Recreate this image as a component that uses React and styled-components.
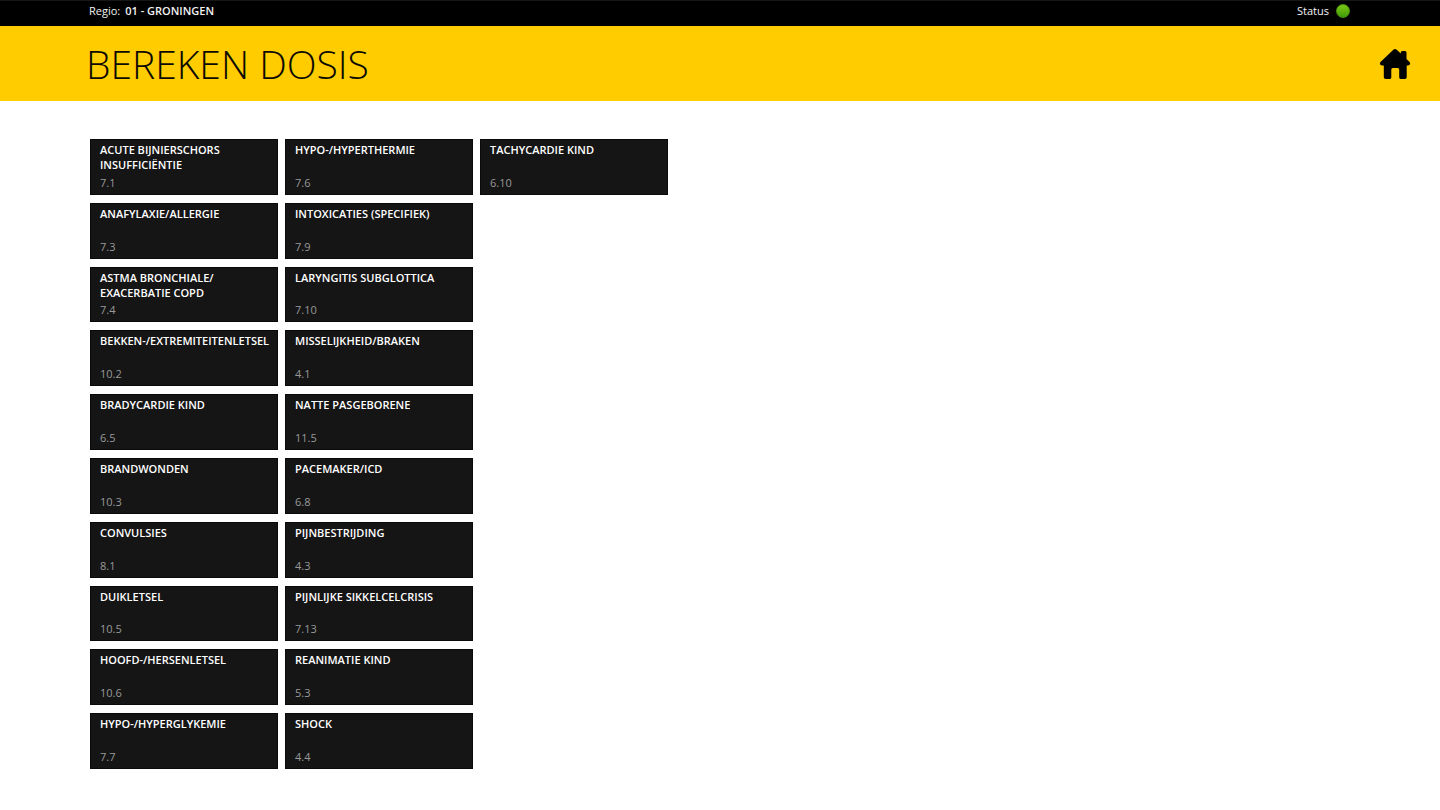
import React from "react";
import styled, { createGlobalStyle } from "styled-components";

const GlobalStyle = createGlobalStyle`
  *, *::before, *::after { box-sizing: border-box; }
  body {
    margin: 0;
    background: #fff;
    font-family: "Segoe UI", "Open Sans", "Noto Sans", sans-serif;
  }
`;

const StatusBar = styled.header`
  display: flex;
  justify-content: space-between;
  align-items: flex-start;
  height: 26px;
  padding: 2px 90px 0 89px;
  background: #000;
  border-top: 1px solid #161616;
  color: #f2f2f2;
  font-size: 11px;
  line-height: 16px;
`;

const Region = styled.div`
  display: flex;
  gap: 5px;
`;

const RegionName = styled.strong`
  font-weight: 600;
`;

const Status = styled.div`
  display: flex;
  align-items: center;
  gap: 7px;
`;

const StatusLight = styled.span`
  width: 14px;
  height: 14px;
  border-radius: 50%;
  background: linear-gradient(#7cc718, #3f9d06);
  border: 1px solid #4a8f12;
`;

const TitleBar = styled.div`
  display: flex;
  justify-content: space-between;
  align-items: center;
  height: 75px;
  padding: 0 28px 0 86px;
  background: #ffcc00;
`;

const Title = styled.h1`
  margin: 0;
  color: #0c0a00;
  font-size: 39px;
  font-weight: 300;
  line-height: 56px;
`;

const HomeButton = styled.button`
  display: flex;
  padding: 0;
  border: 0;
  background: none;
  color: #000;
  cursor: pointer;
`;

const Tiles = styled.main`
  display: grid;
  grid-auto-flow: column;
  grid-template-rows: repeat(10, 1fr);
  grid-auto-columns: 188px;
  gap: 8px 7px;
  height: 630px;
  margin: 38px 90px 40px;
`;

const Tile = styled.button`
  display: flex;
  flex-direction: column;
  justify-content: space-between;
  min-height: 0;
  padding: 2px 8px 4px 9px;
  border: 1px solid #0a0a0a;
  background: #151515;
  font-family: inherit;
  text-align: left;
  cursor: pointer;
`;

const TileName = styled.span`
  color: #fff;
  font-size: 11px;
  font-weight: 600;
  line-height: 15px;
  white-space: pre-line;
`;

const TileCode = styled.span`
  color: #999;
  font-size: 11px;
  line-height: 15px;
`;

const protocols = [
  ["ACUTE BIJNIERSCHORS\nINSUFFICIËNTIE", "7.1"],
  ["ANAFYLAXIE/ALLERGIE", "7.3"],
  ["ASTMA BRONCHIALE/\nEXACERBATIE COPD", "7.4"],
  ["BEKKEN-/EXTREMITEITENLETSEL", "10.2"],
  ["BRADYCARDIE KIND", "6.5"],
  ["BRANDWONDEN", "10.3"],
  ["CONVULSIES", "8.1"],
  ["DUIKLETSEL", "10.5"],
  ["HOOFD-/HERSENLETSEL", "10.6"],
  ["HYPO-/HYPERGLYKEMIE", "7.7"],
  ["HYPO-/HYPERTHERMIE", "7.6"],
  ["INTOXICATIES (SPECIFIEK)", "7.9"],
  ["LARYNGITIS SUBGLOTTICA", "7.10"],
  ["MISSELIJKHEID/BRAKEN", "4.1"],
  ["NATTE PASGEBORENE", "11.5"],
  ["PACEMAKER/ICD", "6.8"],
  ["PIJNBESTRIJDING", "4.3"],
  ["PIJNLIJKE SIKKELCELCRISIS", "7.13"],
  ["REANIMATIE KIND", "5.3"],
  ["SHOCK", "4.4"],
  ["TACHYCARDIE KIND", "6.10"],
];

function HomeIcon() {
  return (
    <svg width="34" height="34" viewBox="0 0 34 34" fill="currentColor" aria-hidden="true">
      <path d="M15.6 2.6 Q17 1.2 18.4 2.6 L22.8 6.6 V5.4 Q22.8 3.9 24.3 3.9 H27 Q28.5 3.9 28.5 5.4 V12 L31.6 15 Q32.6 16.2 31.8 17.4 Q31.2 18.5 29.8 18.5 H28.7 V30.2 Q28.7 32 26.9 32 H22.6 Q21.2 32 21.2 30.6 V22.4 Q21.2 20.9 19.7 20.9 H14.8 Q13.3 20.9 13.3 22.4 V30.6 Q13.3 32 11.9 32 H7.6 Q5.8 32 5.8 30.2 V18.5 H4.2 Q2.8 18.5 2.2 17.4 Q1.5 16.2 2.5 15 Z" />
    </svg>
  );
}

export default function App() {
  return (
    <>
      <GlobalStyle />
      <StatusBar>
        <Region>
          <span>Regio:</span>
          <RegionName>01 - GRONINGEN</RegionName>
        </Region>
        <Status>
          <span>Status</span>
          <StatusLight />
        </Status>
      </StatusBar>
      <TitleBar>
        <Title>BEREKEN DOSIS</Title>
        <HomeButton type="button" aria-label="Home">
          <HomeIcon />
        </HomeButton>
      </TitleBar>
      <Tiles>
        {protocols.map(([name, code]) => (
          <Tile key={name} type="button">
            <TileName>{name}</TileName>
            <TileCode>{code}</TileCode>
          </Tile>
        ))}
      </Tiles>
    </>
  );
}
